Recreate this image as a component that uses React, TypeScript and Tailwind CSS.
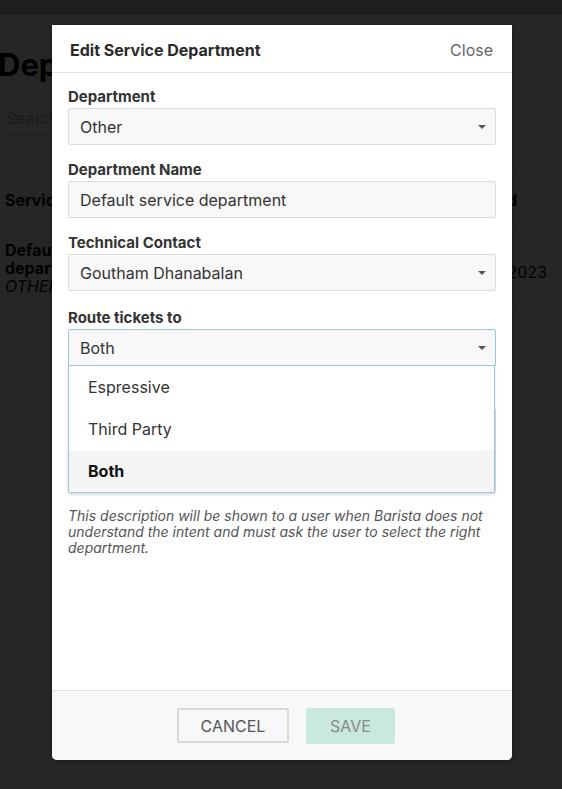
import React from "react";

function Caret() {
  return (
    <svg width="8" height="4" viewBox="0 0 8 4" className="shrink-0">
      <path d="M0 0h8L4 4z" fill="#555" />
    </svg>
  );
}

function Label({ children }: { children: React.ReactNode }) {
  return <div className="text-[15px] leading-[17px] font-bold text-[#333] mb-[3px]">{children}</div>;
}

function SelectBox({ value }: { value: string }) {
  return (
    <div className="h-[37px] border border-[#dcdcdc] bg-[#f8f8f8] rounded-[2px] flex items-center justify-between pl-[11px] pr-[9px] text-[16px] text-[#333]">
      <span>{value}</span>
      <Caret />
    </div>
  );
}

export default function App() {
  return (
    <div className="relative w-[562px] h-[789px] overflow-hidden bg-white font-['Inter',sans-serif]">
      {/* underlying page */}
      <div className="h-[14px] bg-[#cfcfcf] border-b border-[#b8b8b8]" />
      <h1 className="mt-[34px] ml-[-2px] text-[31px] leading-[34px] font-bold text-black whitespace-nowrap">Departments</h1>
      <div className="mt-[18px] ml-[-8px] w-[300px] h-[36px] rounded-full border border-[#cfcfcf] flex items-center pl-[13px] text-[16px] text-[#a8a8a8]">
        Search
      </div>
      <div className="mt-[36px] border-t border-[#e0e0e0]">
        <div className="h-[55px] border-b border-[#e0e0e0] flex items-center justify-between pl-[5px] pr-[45px] text-[16px] font-bold text-black">
          <span>Service Department</span>
          <span>Updated</span>
        </div>
        <div className="h-[80px] border-b border-[#e0e0e0] flex items-center justify-between pl-[5px] pr-[15px] text-[16px] text-black">
          <div className="leading-[18px]">
            <div className="font-bold">Default service</div>
            <div className="font-bold">department</div>
            <div className="italic">OTHER</div>
          </div>
          <span className="mt-[8px]">Jan 12, 2023</span>
        </div>
      </div>

      {/* dimmer */}
      <div className="absolute inset-0 bg-black/85" />

      {/* modal */}
      <div className="absolute left-[52px] top-[25px] w-[460px] h-[735px] bg-white rounded-b-[5px] flex flex-col shadow-[0_1px_4px_rgba(0,0,0,0.4)]">
        <div className="h-[48px] shrink-0 border-b border-[#e3e3e3] flex items-center justify-between pl-[18px] pr-[19px] pt-[2px]">
          <span className="text-[16px] font-bold text-[#2a2a2a]">Edit Service Department</span>
          <span className="text-[16px] text-[#666]">Close</span>
        </div>

        <div className="flex-1 px-[16px] pt-[15px]">
          <div>
            <Label>Department</Label>
            <SelectBox value="Other" />
          </div>
          <div className="mt-[16px]">
            <Label>Department Name</Label>
            <div className="h-[37px] border border-[#dcdcdc] bg-[#f8f8f8] rounded-[2px] flex items-center pl-[11px] text-[16px] text-[#333]">
              Default service department
            </div>
          </div>
          <div className="mt-[16px]">
            <Label>Technical Contact</Label>
            <SelectBox value="Goutham Dhanabalan" />
          </div>
          <div className="mt-[18px] relative z-10">
            <Label>Route tickets to</Label>
            <div className="relative">
              <div className="h-[37px] border border-[#96c8da] bg-[#f8f8f8] rounded-t-[2px] flex items-center justify-between pl-[11px] pr-[9px] text-[16px] text-[#333]">
                <span>Both</span>
                <Caret />
              </div>
              <div className="absolute top-full left-0 right-[1px] bg-white border border-t-0 border-[#96c8da] rounded-b-[2px] shadow-[0_2px_3px_rgba(34,36,38,0.15)]">
                <div className="h-[42px] flex items-center pl-[19px] text-[16px] text-[#333]">Espressive</div>
                <div className="h-[42px] flex items-center pl-[19px] text-[16px] text-[#333]">Third Party</div>
                <div className="h-[42px] flex items-center pl-[19px] text-[16px] font-bold text-[#111] bg-[#f5f5f5]">Both</div>
              </div>
            </div>
          </div>
          <div className="mt-[16px]">
            <div className="text-[15px] leading-[17px] font-bold text-[#333] mb-[9px]">Description</div>
            <div className="h-[84px] border border-[#dcdcdc] bg-[#f8f8f8] rounded-[2px]" />
          </div>
          <p className="mt-[16px] text-[14px] leading-[16px] italic text-[#555]">
            This description will be shown to a user when Barista does not understand the intent and must ask the user to select the right department.
          </p>
        </div>

        <div className="h-[70px] shrink-0 border-t border-[#dedede] bg-[#f7f8fa] rounded-b-[5px] flex items-center justify-center gap-[17px] pl-[8px]">
          <button className="w-[112px] h-[35px] border-2 border-[#d8d8da] rounded-[2px] text-[16px] text-[#555] bg-transparent">
            CANCEL
          </button>
          <button className="w-[89px] h-[36px] rounded-[2px] bg-[#c8e8e0] text-[16px] text-[#8a8a8a]">
            SAVE
          </button>
        </div>
      </div>
    </div>
  );
}
